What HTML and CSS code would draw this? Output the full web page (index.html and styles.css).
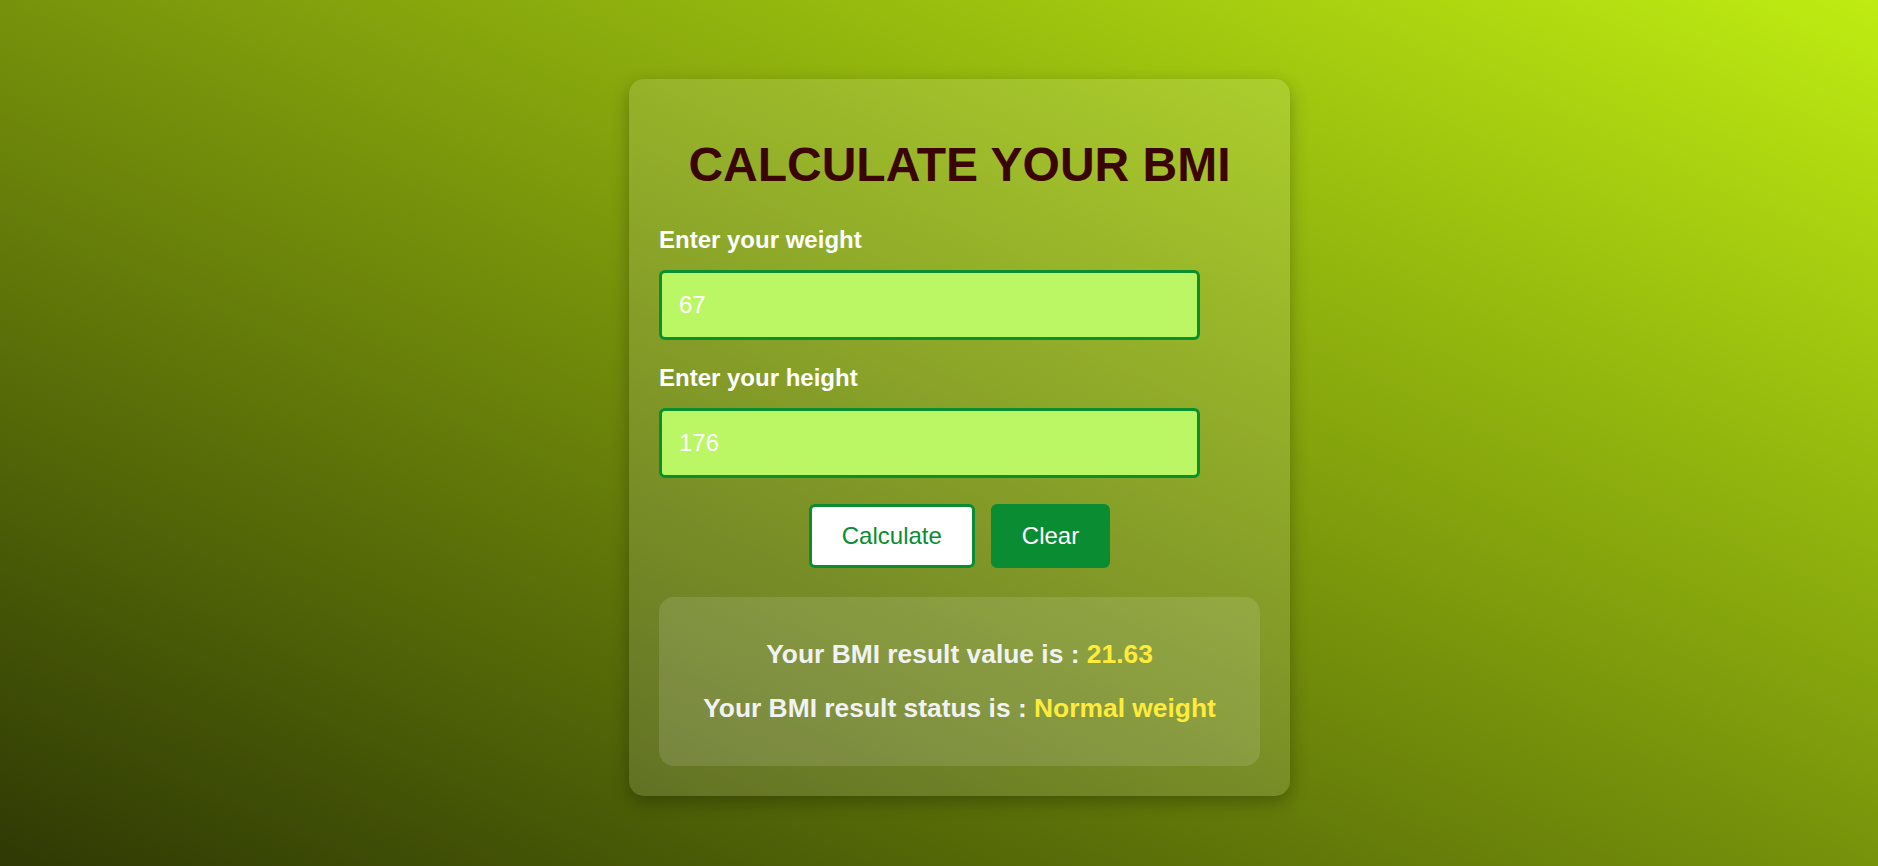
FILE: index.html
```html
<!DOCTYPE html>
<html lang="en">
<head>
<meta charset="utf-8">
<title>BMI Calculator</title>
<link rel="stylesheet" href="styles.css">
</head>
<body>
<div class="page">
  <div class="card">
    <h1 class="title">CALCULATE YOUR BMI</h1>
    <label class="label" for="weight">Enter your weight</label>
    <input class="field" id="weight" type="text" value="67">
    <label class="label" for="height">Enter your height</label>
    <input class="field" id="height" type="text" value="176">
    <div class="actions">
      <button class="btn btn-outline" type="button">Calculate</button>
      <button class="btn btn-solid" type="button">Clear</button>
    </div>
    <div class="result">
      <p class="result-line">Your BMI result value is : <span class="hl">21.63</span></p>
      <p class="result-line">Your BMI result status is : <span class="hl">Normal weight</span></p>
    </div>
  </div>
</div>
</body>
</html>
```

FILE: styles.css
```css
html, body {
  margin: 0;
  padding: 0;
  height: 100%;
}
body {
  font-family: "Liberation Sans", Arial, sans-serif;
  background: linear-gradient(to top right, #2e3904 0%, #bfec12 100%);
  overflow: hidden;
}
.page {
  display: flex;
  justify-content: center;
  align-items: flex-start;
  padding: 79px 0 0 41px;
  box-sizing: border-box;
  height: 100%;
}
.card {
  width: 661px;
  box-sizing: border-box;
  padding: 30px;
  border-radius: 15px;
  background: rgba(255, 255, 255, 0.12);
  box-shadow: 0 6px 18px rgba(0, 0, 0, 0.28);
  display: flex;
  flex-direction: column;
}
.title {
  margin: 28px 0 34px;
  text-align: center;
  font-size: 48px;
  font-weight: bold;
  line-height: normal;
  color: #3c0505;
}
.label {
  display: block;
  font-size: 24px;
  font-weight: bold;
  color: #ffffff;
  margin-bottom: 16px;
}
.field {
  width: 90%;
  box-sizing: border-box;
  height: 70px;
  padding: 0 17px;
  border: 3px solid #0a8f2e;
  border-radius: 6px;
  background: #bbf764;
  color: #ffffff;
  font-family: "Liberation Sans", Arial, sans-serif;
  font-size: 24px;
  outline: none;
  margin: 0 0 24px;
}
.actions {
  display: flex;
  justify-content: center;
  gap: 16px;
  margin-top: 2px;
}
.btn {
  font-family: "Liberation Sans", Arial, sans-serif;
  font-size: 24px;
  line-height: 28px;
  height: 64px;
  padding: 0 28px;
  border: 3px solid #0a8c32;
  border-radius: 6px;
  cursor: pointer;
}
.btn-outline {
  background: #ffffff;
  color: #0a8c32;
  padding: 0 30px;
}
.btn-solid {
  background: #0a8c32;
  color: #ffffff;
}
.result {
  margin-top: 29px;
  padding: 19px 20px;
  border-radius: 15px;
  background: rgba(255, 255, 255, 0.12);
  text-align: center;
}
.result-line {
  margin: 23px 0;
  font-size: 26.4px;
  font-weight: bold;
  color: #f2f2f2;
}
.hl {
  color: #ffeb3b;
}
```
